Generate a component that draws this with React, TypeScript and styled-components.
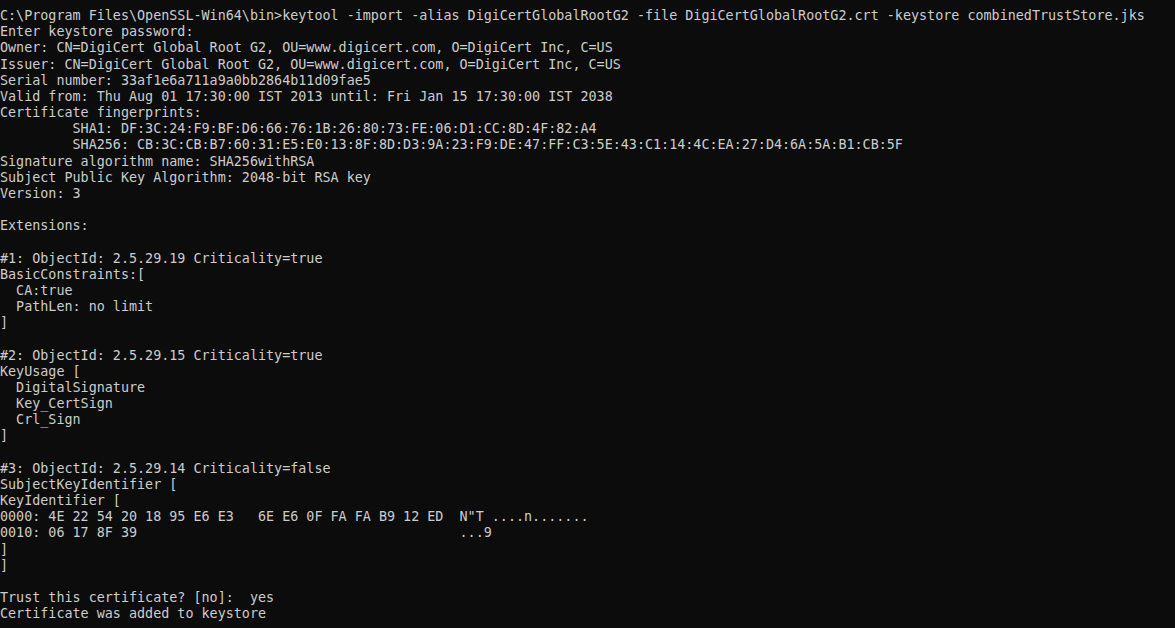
import React from "react";
import styled, { createGlobalStyle } from "styled-components";

const Global = createGlobalStyle`
  html, body {
    margin: 0;
    padding: 0;
    background: #0c0c0c;
  }
  #root {
    min-height: 628px;
    background: #0c0c0c;
  }
`;

const Console = styled.main`
  box-sizing: border-box;
  width: 1175px;
  height: 628px;
  overflow: hidden;
  padding: 8px 0 0 0;
  background: #0c0c0c;
  color: #cccccc;
  font-family: "DejaVu Sans Mono", "Liberation Mono", monospace;
  font-size: 13.4px;
  line-height: 16.17px;
  display: flex;
  flex-direction: column;
`;

const Line = styled.div`
  white-space: pre;
  min-height: 16.17px;
`;

const hexRow1 =
  "0000: 4E 22 54 20 18 95 E6 E3   6E E6 0F FA FA B9 12 ED  N\"T ....n.......";
const hexRow2 =
  "0010: 06 17 8F 39" + " ".repeat(57 - 17) + "...9";

const lines: string[] = [
  "C:\\Program Files\\OpenSSL-Win64\\bin>keytool -import -alias DigiCertGlobalRootG2 -file DigiCertGlobalRootG2.crt -keystore combinedTrustStore.jks",
  "Enter keystore password:",
  "Owner: CN=DigiCert Global Root G2, OU=www.digicert.com, O=DigiCert Inc, C=US",
  "Issuer: CN=DigiCert Global Root G2, OU=www.digicert.com, O=DigiCert Inc, C=US",
  "Serial number: 33af1e6a711a9a0bb2864b11d09fae5",
  "Valid from: Thu Aug 01 17:30:00 IST 2013 until: Fri Jan 15 17:30:00 IST 2038",
  "Certificate fingerprints:",
  "         SHA1: DF:3C:24:F9:BF:D6:66:76:1B:26:80:73:FE:06:D1:CC:8D:4F:82:A4",
  "         SHA256: CB:3C:CB:B7:60:31:E5:E0:13:8F:8D:D3:9A:23:F9:DE:47:FF:C3:5E:43:C1:14:4C:EA:27:D4:6A:5A:B1:CB:5F",
  "Signature algorithm name: SHA256withRSA",
  "Subject Public Key Algorithm: 2048-bit RSA key",
  "Version: 3",
  "",
  "Extensions:",
  "",
  "#1: ObjectId: 2.5.29.19 Criticality=true",
  "BasicConstraints:[",
  "  CA:true",
  "  PathLen: no limit",
  "]",
  "",
  "#2: ObjectId: 2.5.29.15 Criticality=true",
  "KeyUsage [",
  "  DigitalSignature",
  "  Key_CertSign",
  "  Crl_Sign",
  "]",
  "",
  "#3: ObjectId: 2.5.29.14 Criticality=false",
  "SubjectKeyIdentifier [",
  "KeyIdentifier [",
  hexRow1,
  hexRow2,
  "]",
  "]",
  "",
  "Trust this certificate? [no]:  yes",
  "Certificate was added to keystore",
];

export default function App() {
  return (
    <>
      <Global />
      <Console>
        {lines.map((text, i) => (
          <Line key={i}>{text}</Line>
        ))}
      </Console>
    </>
  );
}
